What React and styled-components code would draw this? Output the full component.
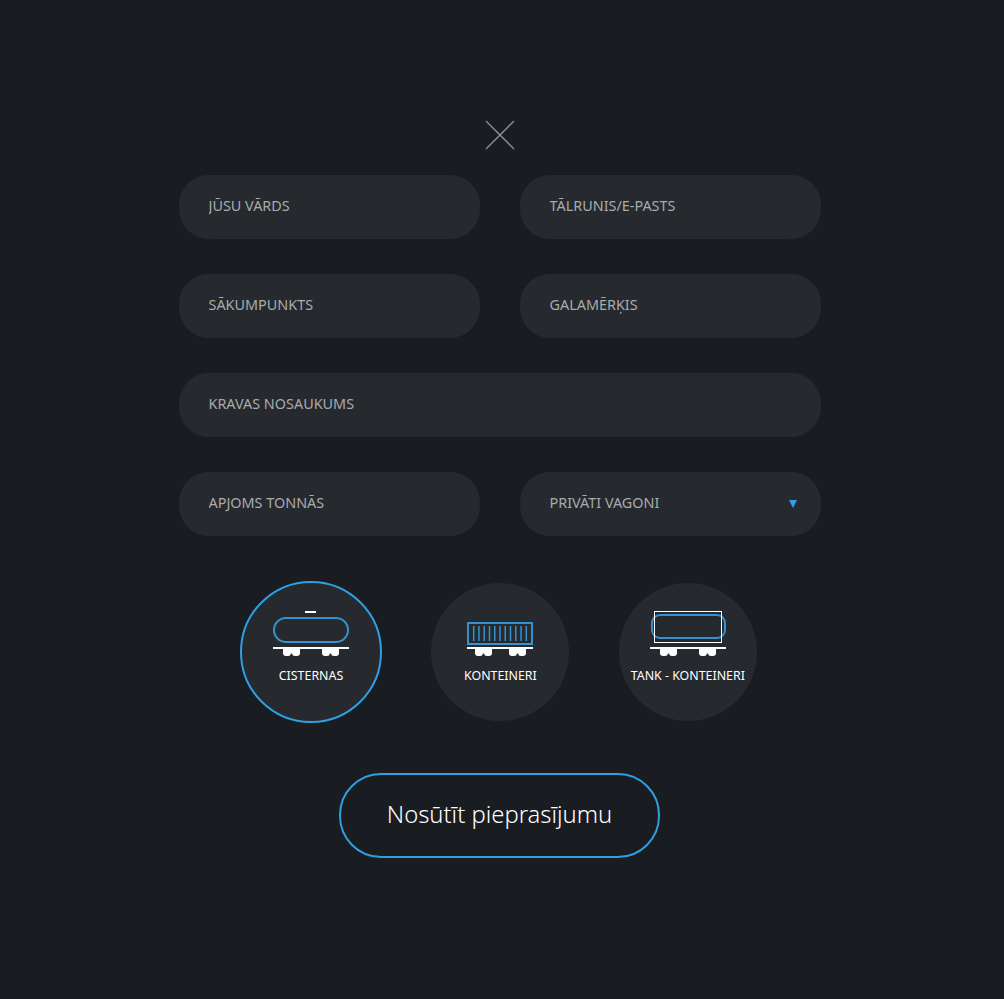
import React, { useState } from 'react'
import styled, { createGlobalStyle } from 'styled-components'

const GlobalStyle = createGlobalStyle`
  html, body {
    margin: 0;
    padding: 0;
    background: #191c21;
  }
`

const fontStack = `"Noto Sans", "Open Sans", sans-serif`

const Page = styled.div`
  width: 1000px;
  min-height: 999px;
  padding-top: 120px;
  box-sizing: border-box;
  display: flex;
  flex-direction: column;
  align-items: center;
  font-family: ${fontStack};
`

const CloseButton = styled.button`
  width: 30px;
  height: 30px;
  padding: 0;
  border: none;
  background: none;
  display: block;
  margin-bottom: 25px;
`

const Form = styled.form`
  width: 642px;
  display: grid;
  grid-template-columns: 301px 301px;
  column-gap: 40px;
  row-gap: 35px;
`

const Field = styled.input`
  grid-column: ${(p) => (p.$wide ? '1 / -1' : 'auto')};
  height: 64px;
  box-sizing: border-box;
  padding: 0 30px 3px 29.5px;
  border: none;
  outline: none;
  border-radius: 30px;
  background: #26292d;
  color: #a9abad;
  font-family: ${fontStack};
  font-size: 14.4px;
  text-transform: uppercase;
  &::placeholder {
    color: #a9abad;
    opacity: 1;
  }
`

const SelectWrap = styled.div`
  position: relative;
`

const Select = styled.select`
  width: 100%;
  height: 64px;
  box-sizing: border-box;
  padding: 0 30px 3px 29.5px;
  border: none;
  outline: none;
  border-radius: 30px;
  appearance: none;
  background: #26292d;
  color: #a9abad;
  font-family: ${fontStack};
  font-size: 14.4px;
`

const Arrow = styled.span`
  position: absolute;
  right: 24px;
  top: 28px;
  width: 0;
  height: 0;
  border-left: 4px solid transparent;
  border-right: 4px solid transparent;
  border-top: 8px solid #2f9fe4;
  pointer-events: none;
`

const Types = styled.div`
  margin-top: 45px;
  width: 517px;
  margin-left: -3px;
  display: flex;
  gap: 49.4px;
  align-items: center;
`

const TypeCircle = styled.div`
  flex: none;
  width: ${(p) => (p.$active ? '142px' : '138px')};
  height: ${(p) => (p.$active ? '142px' : '138px')};
  box-sizing: border-box;
  border-radius: 50%;
  background: #26292d;
  border: ${(p) => (p.$active ? '2px solid #2f9fe4' : 'none')};
  display: flex;
  flex-direction: column;
  align-items: center;
  padding-top: 27px;
  cursor: pointer;
`

const TypeLabel = styled.span`
  margin-top: 10px;
  color: #fff;
  font-size: 12.4px;
  line-height: 16px;
  white-space: nowrap;
`

const Submit = styled.button`
  margin-top: 50px;
  margin-left: -1px;
  width: 321px;
  height: 85px;
  box-sizing: border-box;
  border: 2px solid #2f9fe4;
  border-radius: 42px;
  padding: 0 0 4px;
  background: none;
  color: #fff;
  font-family: ${fontStack};
  font-size: 23.8px;
  font-weight: 300;
`

const BLUE = '#3591cf'

const Wheels = ({ x }) => (
  <path
    d={`M${x} 39h17v4a3 3 0 0 1-3 3h-2a3 3 0 0 1-3-2.5a2.5 2.5 0 0 0-1 0a3 3 0 0 1-3 2.5h-2a3 3 0 0 1-3-3z`}
    fill="#fff"
  />
)

const Undercarriage = ({ a, b }) => (
  <>
    <rect x="0" y="37" width="76" height="2" fill="#fff" />
    <Wheels x={a} />
    <Wheels x={b} />
  </>
)

const TankIcon = () => (
  <svg width="76" height="48" viewBox="0 0 76 48" fill="none">
    <rect x="32" y="1" width="11" height="2" fill="#fff" />
    <rect x="1" y="8" width="74" height="24" rx="12" stroke={BLUE} strokeWidth="2" />
    <Undercarriage a={10} b={49} />
  </svg>
)

const ContainerIcon = () => {
  const bars = Array.from({ length: 11 }, (_, i) => 11.7 + i * 5.26)
  return (
    <svg width="76" height="48" viewBox="0 0 76 48" fill="none">
      <rect x="6" y="13" width="64" height="21" stroke={BLUE} strokeWidth="2" />
      {bars.map((x) => (
        <line key={x} x1={x} y1="16" x2={x} y2="31" stroke={BLUE} strokeWidth="1.5" />
      ))}
      <rect x="5" y="37" width="66" height="2" fill="#fff" />
      <Wheels x={13} />
      <Wheels x={47} />
    </svg>
  )
}

const TankContainerIcon = () => (
  <svg width="76" height="48" viewBox="0 0 76 48" fill="none">
    <rect x="2" y="5" width="73" height="23" rx="8" stroke={BLUE} strokeWidth="2" />
    <rect x="4.5" y="1.5" width="67" height="31" stroke="#fff" strokeWidth="1" />
    <Undercarriage a={10} b={49} />
  </svg>
)

function App() {
  const [vehicle, setVehicle] = useState('cisternas')
  const types = [
    { id: 'cisternas', label: 'CISTERNAS', icon: <TankIcon /> },
    { id: 'konteineri', label: 'KONTEINERI', icon: <ContainerIcon /> },
    { id: 'tank', label: 'TANK - KONTEINERI', icon: <TankContainerIcon /> },
  ]

  return (
    <Page>
      <GlobalStyle />
      <CloseButton type="button" aria-label="Aizvērt">
        <svg width="30" height="30" viewBox="0 0 30 30" stroke="#8f9193" strokeWidth="1.3">
          <line x1="1" y1="1" x2="29" y2="29" />
          <line x1="29" y1="1" x2="1" y2="29" />
        </svg>
      </CloseButton>
      <Form>
        <Field placeholder="Jūsu vārds" />
        <Field placeholder="Tālrunis/e-pasts" />
        <Field placeholder="Sākumpunkts" />
        <Field placeholder="Galamērķis" />
        <Field $wide placeholder="Kravas nosaukums" />
        <Field placeholder="Apjoms tonnās" />
        <SelectWrap>
          <Select defaultValue="private">
            <option value="private">PRIVĀTI VAGONI</option>
          </Select>
          <Arrow />
        </SelectWrap>
      </Form>
      <Types>
        {types.map((t) => (
          <TypeCircle key={t.id} $active={vehicle === t.id} onClick={() => setVehicle(t.id)}>
            {t.icon}
            <TypeLabel>{t.label}</TypeLabel>
          </TypeCircle>
        ))}
      </Types>
      <Submit type="button">Nosūtīt pieprasījumu</Submit>
    </Page>
  )
}

export default App
